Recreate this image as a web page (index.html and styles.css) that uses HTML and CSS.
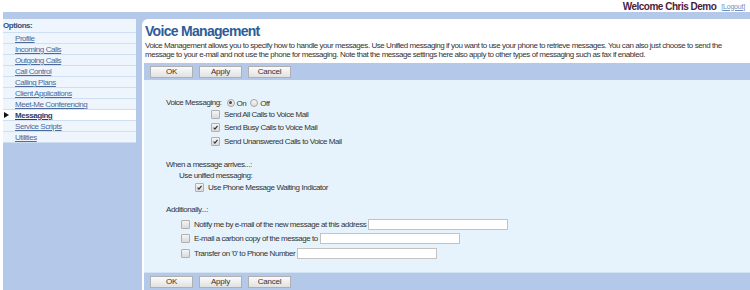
FILE: index.html
```html
<!DOCTYPE html>
<html>
<head>
<meta charset="utf-8">
<link rel="stylesheet" href="styles.css">
</head>
<body>
<div class="top">
  <span class="welcome">Welcome Chris Demo</span>
  <a class="logout" href="#">[Logout]</a>
</div>
<div class="page">
  <nav class="side">
    <div class="opt-title">Options:</div>
    <a class="item" href="#">Profile</a>
    <a class="item" href="#">Incoming Calls</a>
    <a class="item" href="#">Outgoing Calls</a>
    <a class="item" href="#">Call Control</a>
    <a class="item" href="#">Calling Plans</a>
    <a class="item" href="#">Client Applications</a>
    <a class="item" href="#">Meet-Me Conferencing</a>
    <a class="item active" href="#"><span class="arrow"></span>Messaging</a>
    <a class="item" href="#">Service Scripts</a>
    <a class="item" href="#">Utilities</a>
  </nav>
  <main class="panel">
    <h1 class="title">Voice Management</h1>
    <p class="desc">Voice Management allows you to specify how to handle your messages. Use Unified messaging if you want to use your phone to retrieve messages. You can also just choose to send the message to your e-mail and not use the phone for messaging. Note that the message settings here also apply to other types of messaging such as fax if enabled.</p>
    <div class="bar">
      <button class="btn">OK</button><button class="btn">Apply</button><button class="btn">Cancel</button>
    </div>
    <div class="content">
      <div class="row vm">
        <span class="label">Voice Messaging:</span>
        <span class="radio on"></span><span class="rtext">On</span>
        <span class="radio"></span><span class="rtext">Off</span>
      </div>
      <div class="row cbrow lvl-send"><span class="cb"></span>Send All Calls to Voice Mail</div>
      <div class="row cbrow lvl-send"><span class="cb checked"><svg viewBox="0 0 8 8"><path d="M1.8 4.2 L3.3 5.8 L6.3 2.2" /></svg></span>Send Busy Calls to Voice Mail</div>
      <div class="row cbrow lvl-send"><span class="cb checked"><svg viewBox="0 0 8 8"><path d="M1.8 4.2 L3.3 5.8 L6.3 2.2" /></svg></span>Send Unanswered Calls to Voice Mail</div>

      <div class="row label when">When a message arrives...:</div>
      <div class="row label sub">Use unified messaging:</div>
      <div class="row cbrow lvl-mwi"><span class="cb checked"><svg viewBox="0 0 8 8"><path d="M1.8 4.2 L3.3 5.8 L6.3 2.2" /></svg></span>Use Phone Message Waiting Indicator</div>

      <div class="row label addl">Additionally...:</div>
      <div class="row cbrow lvl-add first"><span class="cb"></span>Notify me by e-mail of the new message at this address<input class="field" type="text"></div>
      <div class="row cbrow lvl-add"><span class="cb"></span>E-mail a carbon copy of the message to<input class="field" type="text"></div>
      <div class="row cbrow lvl-add"><span class="cb"></span>Transfer on '0' to Phone Number<input class="field" type="text"></div>
    </div>
    <div class="bar">
      <button class="btn">OK</button><button class="btn">Apply</button><button class="btn">Cancel</button>
    </div>
  </main>
</div>
</body>
</html>
```

FILE: styles.css
```css
html, body {
  margin: 0;
  padding: 0;
  background: #ffffff;
  font-family: "Liberation Sans", Arial, sans-serif;
  font-size: 8px;
  letter-spacing: -0.45px;
  color: #333333;
  overflow: hidden;
  height: 290px;
}

.top {
  height: 12px;
  display: flex;
  justify-content: flex-end;
  align-items: center;
  padding-right: 5px;
  gap: 5px;
}

.welcome {
  font-weight: bold;
  font-size: 10px;
  letter-spacing: -0.5px;
  color: #4a1d3f;
}

.logout {
  font-size: 7px;
  letter-spacing: -0.2px;
  color: #6f8fc0;
}

.page {
  margin-left: 3px;
  background: #b4c9ea;
  display: flex;
  align-items: flex-start;
  gap: 6px;
  padding-top: 7px;
  height: 271px;
}

.side {
  width: 133px;
  flex: none;
  background: #eef5fd;
  display: flex;
  flex-direction: column;
}

.opt-title {
  height: 13px;
  line-height: 14px;
  font-weight: bold;
  color: #34507a;
  border-bottom: 1px solid #cfdef2;
}

.item {
  position: relative;
  height: 10px;
  line-height: 11px;
  padding-left: 12px;
  color: #4b6b9c;
  text-decoration: underline;
  border-bottom: 1px solid #cfdef2;
}

.item.active {
  background: #ffffff;
  color: #1f3f73;
  font-weight: bold;
}

.arrow {
  position: absolute;
  left: 1px;
  top: 2px;
  width: 0;
  height: 0;
  border-top: 3.5px solid transparent;
  border-bottom: 3.5px solid transparent;
  border-left: 5px solid #111111;
}

.panel {
  flex: 1;
  background: #ffffff;
  border-top-left-radius: 6px;
  padding: 0 0 0 2px;
  height: 271px;
  display: flex;
  flex-direction: column;
}

.title {
  margin: 0;
  padding: 3px 0 0 1px;
  height: 19px;
  font-size: 14px;
  letter-spacing: -0.7px;
  font-weight: bold;
  color: #2c5d97;
  line-height: 19px;
}

.desc {
  margin: 0;
  padding: 0 0 4px 1px;
  height: 18px;
  line-height: 9px;
}

.bar {
  background: #b4c9ea;
  height: 17px;
  display: flex;
  align-items: center;
  gap: 6px;
  padding-left: 6px;
  flex: none;
}

.btn {
  width: 43px;
  height: 12px;
  padding: 0;
  margin: 0;
  border: 1px solid #b0b0b0;
  background: linear-gradient(#fbfbfb, #e1e1e1);
  font-family: inherit;
  font-size: 8px;
  letter-spacing: -0.2px;
  color: #333333;
  line-height: 10px;
}

.content {
  background: #e6f3fd;
  height: 193px;
  padding-top: 17px;
  border-bottom: 1px solid #d2e3f4;
  box-sizing: border-box;
  flex: none;
}

.row {
  display: flex;
  align-items: center;
  height: 13.3px;
}

.vm {
  padding-left: 22px;
  height: 11px;
}

.vm .label {
  margin-right: 5px;
}

.radio {
  width: 6px;
  height: 6px;
  border: 1px solid #a5a5a5;
  border-radius: 50%;
  background: linear-gradient(#f6f6f6, #dddddd);
  display: inline-block;
  position: relative;
  margin-right: 2px;
  flex: none;
}

.radio.on::after {
  content: "";
  position: absolute;
  left: 1.5px;
  top: 1.5px;
  width: 3px;
  height: 3px;
  border-radius: 50%;
  background: #444444;
}

.rtext {
  margin-right: 4px;
  padding-top: 2px;
}

.cb {
  width: 7px;
  height: 7px;
  border: 1px solid #b0b0b0;
  border-radius: 1px;
  background: linear-gradient(#f4f4f4, #dadada);
  display: inline-flex;
  margin-right: 4px;
  flex: none;
}

.cb svg {
  width: 7px;
  height: 7px;
  fill: none;
  stroke: #333333;
  stroke-width: 1.4;
}

.lvl-send {
  padding-left: 67px;
}

.when {
  margin-top: 11.5px;
  padding-left: 22px;
  height: 11px;
}

.sub {
  padding-left: 35px;
  height: 11px;
}

.lvl-mwi {
  padding-left: 51px;
  height: 12px;
}

.addl {
  margin-top: 10.5px;
  padding-left: 22px;
  height: 12px;
}

.lvl-add {
  padding-left: 37px;
  height: 14.5px;
}

.lvl-add.first {
  margin-top: 1px;
}

.field {
  width: 140px;
  height: 11px;
  box-sizing: border-box;
  margin: 0 0 0 2px;
  border: 1px solid #c3c3c3;
  background: #ffffff;
  padding: 0;
  flex: none;
}
```
